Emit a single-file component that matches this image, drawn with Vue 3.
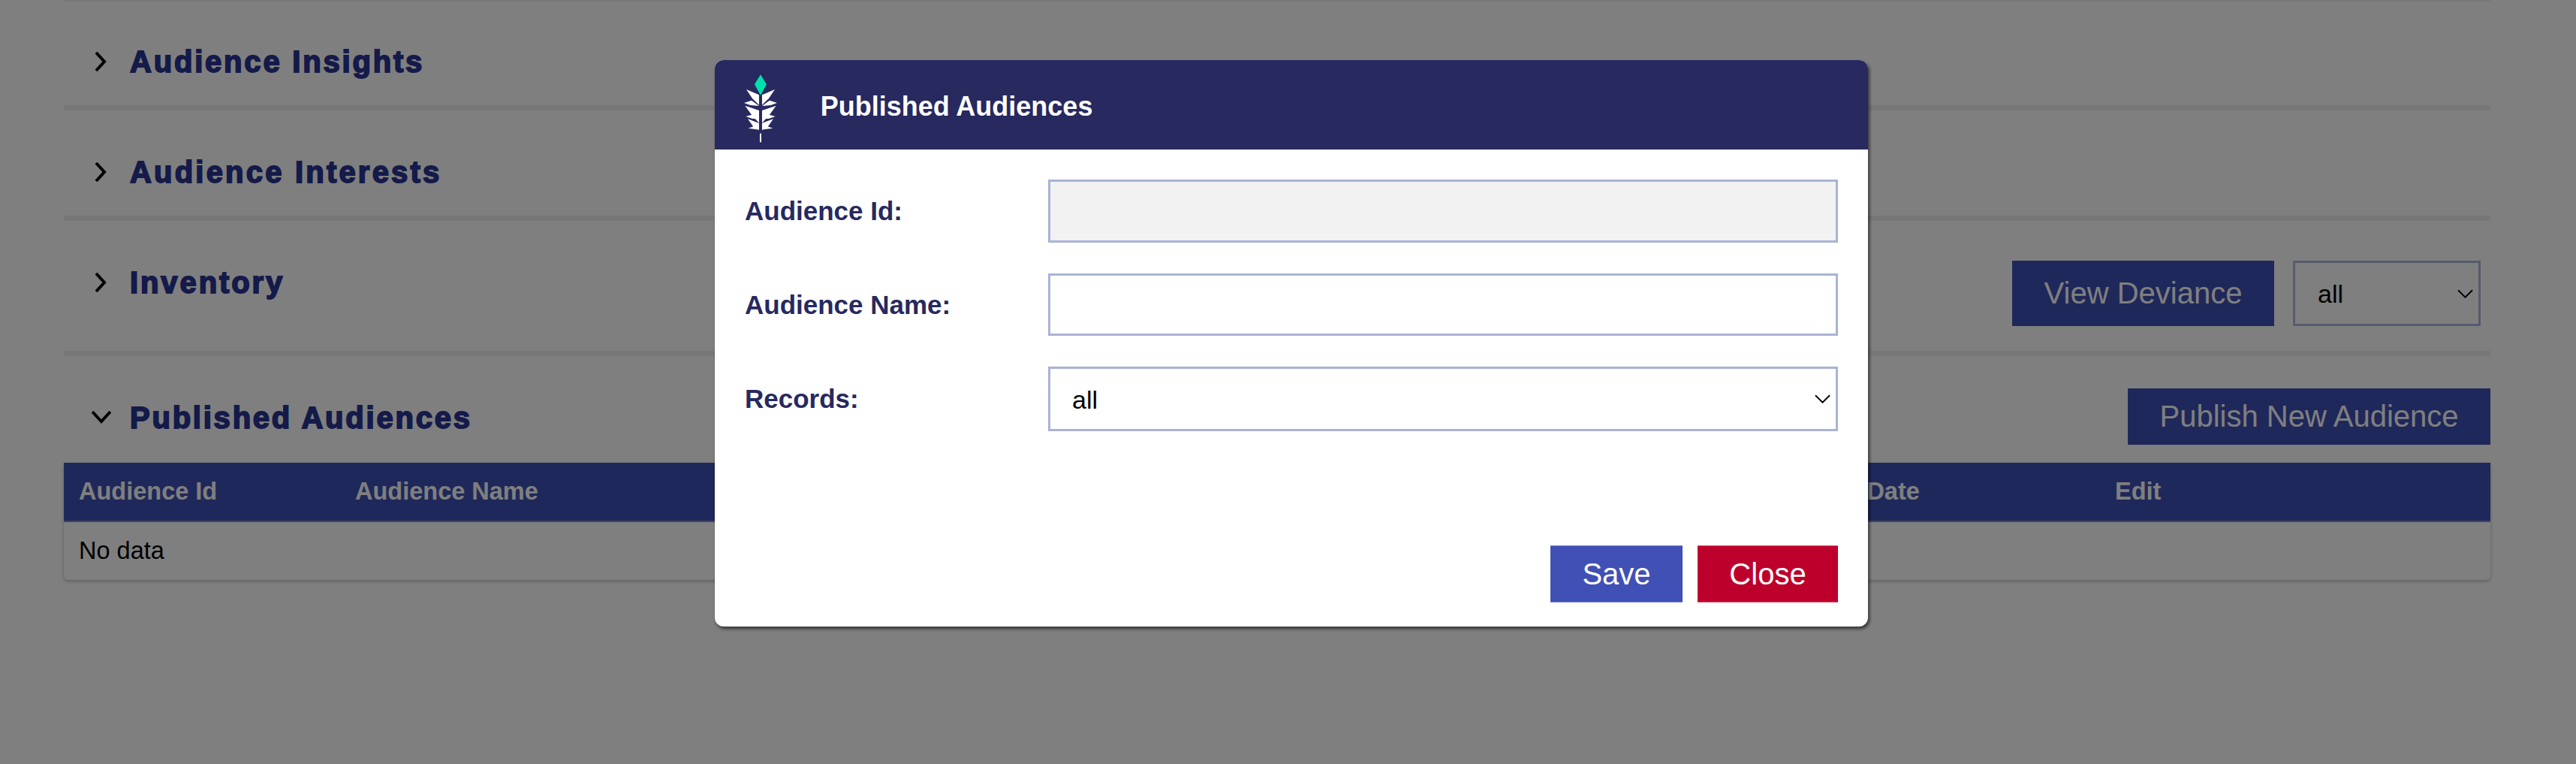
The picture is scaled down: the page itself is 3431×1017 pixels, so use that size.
<script setup>
const closedSections = [
  { name: 'Audience Insights', spacing: 2.8 },
  { name: 'Audience Interests', spacing: 3.2 }
]
const columns = ['Audience Id', 'Audience Name', 'Publish Date', 'Edit']
const spacing = (v) => ({ letterSpacing: v + 'px' })
</script>

<template>
  <div class="page">
    <main class="content">
      <div class="top-edge"></div>
      <section v-for="s in closedSections" :key="s.name" class="section">
        <div class="head">
          <svg class="chev" viewBox="0 0 26 26"><polyline points="6,1 17,13 6,25" /></svg>
          <h2 class="title" :style="spacing(s.spacing)">{{ s.name }}</h2>
        </div>
      </section>

      <section class="section inventory">
        <div class="head">
          <svg class="chev" viewBox="0 0 26 26"><polyline points="6,1 17,13 6,25" /></svg>
          <h2 class="title" :style="spacing(2.9)">Inventory</h2>
        </div>
        <div class="controls">
          <button class="btn primary deviance">View Deviance</button>
          <span class="select-wrap page-wrap">
            <select class="page-select"><option>all</option></select>
            <svg class="arrow" viewBox="0 0 22 12"><polyline points="1,1 11,11 21,1" /></svg>
          </span>
        </div>
      </section>

      <section class="published">
        <div class="published-top">
          <div class="head">
            <svg class="chev" viewBox="0 0 26 26"><polyline points="1,6 13,19 25,6" /></svg>
            <h2 class="title" :style="spacing(2.77)">Published Audiences</h2>
          </div>
          <button class="btn primary publish">Publish New Audience</button>
        </div>
        <div class="table">
          <div class="thead">
            <span v-for="c in columns" :key="c">{{ c }}</span>
          </div>
          <div class="tbody">No data</div>
        </div>
      </section>
    </main>

    <div class="overlay">
      <div class="modal">
        <header class="modal-head">
          <svg class="logo" viewBox="150 115 140 280">
            <polygon class="gem" points="219,119 243,158 219,201 195,158" />
            <g class="leaves">
              <polygon points="162,178 213,200 213,240 186,214" />
              <polygon points="153,232 183,222 213,244 178,241" />
              <polygon points="157,243 213,262 213,312 184,281" />
              <polygon points="160,286 193,277 213,296 186,295" />
              <polygon points="168,296 213,313 213,340 189,326" />
              <polygon points="170,333 193,325 213,339" />
              <g transform="matrix(-1 0 0 1 438 0)">
                <polygon points="162,178 213,200 213,240 186,214" />
                <polygon points="153,232 183,222 213,244 178,241" />
                <polygon points="157,243 213,262 213,312 184,281" />
                <polygon points="160,286 193,277 213,296 186,295" />
                <polygon points="168,296 213,313 213,340 189,326" />
                <polygon points="170,333 193,325 213,339" />
              </g>
              <rect x="216" y="354" width="6" height="35" />
            </g>
          </svg>
          <span class="modal-title">Published Audiences</span>
        </header>
        <div class="modal-body">
          <label class="row">
            <span class="label">Audience Id:</span>
            <input class="field disabled" disabled />
          </label>
          <label class="row">
            <span class="label">Audience Name:</span>
            <input class="field name" />
          </label>
          <label class="row">
            <span class="label">Records:</span>
            <span class="select-wrap modal-wrap">
              <select class="field select"><option>all</option></select>
              <svg class="arrow" viewBox="0 0 22 12"><polyline points="1,1 11,11 21,1" /></svg>
            </span>
          </label>
        </div>
        <footer class="modal-foot">
          <button class="btn save">Save</button>
          <button class="btn close">Close</button>
        </footer>
      </div>
    </div>
  </div>
</template>

<style>
html, body { margin: 0; background: #fff; }
</style>

<style scoped>
.page {
  position: relative;
  height: 1017px;
  overflow: hidden;
  font-family: "Liberation Sans", Arial, sans-serif;
  color: #000;
}
.content {
  padding: 0 114px 0 85px;
}
.top-edge {
  height: 3px;
  background: linear-gradient(#e6e6e6, #ffffff);
}
.section {
  display: flex;
  justify-content: space-between;
  align-items: flex-start;
  height: 137px;
  border-bottom: 7px solid #efefef;
}
.top-edge + .section + .section { height: 140px; }
.inventory.section { height: 173px; }
.head {
  display: flex;
  align-items: center;
  gap: 25px;
  height: 50px;
  padding: 54px 0 0 37px;
}
.top-edge + .section + .section .head,
.inventory .head { padding-top: 57px; }
.chev { width: 26px; height: 26px; flex: none; }
.chev polyline { fill: none; stroke: #000; stroke-width: 4; }
.title {
  margin: 0;
  font-size: 40px;
  line-height: 50px;
  font-weight: 700;
  color: #283593;
  -webkit-text-stroke: 1.8px #283593;
}
.controls {
  display: flex;
  gap: 25px;
  margin: 53px 13px 0 0;
}
.btn {
  border: 0;
  padding: 0;
  font: inherit;
  font-size: 40px;
  color: #fff;
  background: #3f51b5;
}
.deviance { width: 349px; height: 87px; }
.select-wrap {
  position: relative;
  display: block;
}
.page-wrap { width: 250px; height: 87px; }
.modal-wrap { flex: 1; min-width: 0; display: flex; }
.arrow {
  position: absolute;
  right: 10px;
  top: 50%;
  width: 21px;
  height: 12px;
  margin-top: -6px;
  pointer-events: none;
}
.arrow polyline { fill: none; stroke: #000; stroke-width: 2; }
.page-select {
  appearance: none;
  width: 250px;
  height: 87px;
  box-sizing: border-box;
  border: 3px solid #adb7dc;
  border-radius: 0;
  background: #fff;
  padding-left: 30px;
  font: 34px "Liberation Sans", Arial, sans-serif;
  color: #000;
}
.published-top {
  display: flex;
  justify-content: space-between;
  align-items: flex-start;
  height: 142px;
}
.published-top .head { padding-top: 57px; }
.published-top .chev { margin-top: -2px; }
.publish { width: 483px; height: 75px; margin-top: 43px; }
.table {
  border-radius: 0 0 6px 6px;
  box-shadow: 0 2px 5px rgba(0, 0, 0, 0.25);
}
.thead {
  display: grid;
  grid-template-columns: 368px 1887px 457px 1fr;
  align-items: center;
  height: 77px;
  padding-left: 20px;
  background: #3f51b5;
  color: #fff;
  font-size: 32.5px;
  font-weight: 700;
  border-bottom: 2px solid #7b86c6;
}
.tbody {
  display: flex;
  align-items: center;
  height: 77px;
  padding-left: 20px;
  font-size: 32.5px;
}
.overlay {
  position: absolute;
  inset: 0;
  display: flex;
  justify-content: center;
  align-items: flex-start;
  padding: 80px 0 0 9px;
  background: rgba(0, 0, 0, 0.5);
}
.modal {
  width: 1536px;
  height: 754px;
  display: flex;
  flex-direction: column;
  background: #fff;
  border-radius: 12px;
  box-shadow: 2px 3px 4px rgba(0, 0, 0, 0.6);
  overflow: hidden;
}
.modal-head {
  display: flex;
  align-items: flex-start;
  height: 119px;
  flex: none;
  background: #27295f;
  color: #fff;
}
.logo {
  width: 46.67px;
  height: 93.33px;
  flex: none;
  margin: 18px 56px 0 38px;
}
.gem { fill: #00e0ac; }
.leaves { fill: #fff; }
.modal-title {
  font-size: 36px;
  font-weight: 700;
  line-height: 119px;
  margin-top: 2px;
}
.modal-body {
  display: flex;
  flex-direction: column;
  gap: 41px;
  padding: 40px 40px 0;
}
.row {
  display: flex;
  align-items: center;
}
.label {
  width: 404px;
  flex: none;
  font-size: 35px;
  font-weight: 700;
  color: #27295f;
}
.field {
  flex: 1;
  min-width: 0;
  height: 84px;
  box-sizing: border-box;
  border: 3px solid #a9b3d6;
  border-radius: 0;
  background: #fff;
  padding: 0 0 0 28px;
  font: 34px "Liberation Sans", Arial, sans-serif;
  color: #000;
  outline: none;
}
.disabled { background: #f2f2f2; }
.name { height: 83px; }
.select { height: 86px; appearance: none; padding-top: 2px; padding-left: 29px; }
.modal-foot {
  margin-top: auto;
  display: flex;
  justify-content: flex-end;
  gap: 20px;
  padding: 0 40px 32px;
}
.save, .close {
  height: 76px;
  box-sizing: border-box;
}
.save { width: 176px; background: #4050b5; border-top: 1px solid #7682d0; border-bottom: 1px solid #7682d0; }
.close { width: 187px; background: #bd002b; border-top: 1px solid #d4506c; border-bottom: 1px solid #d4506c; }
</style>
